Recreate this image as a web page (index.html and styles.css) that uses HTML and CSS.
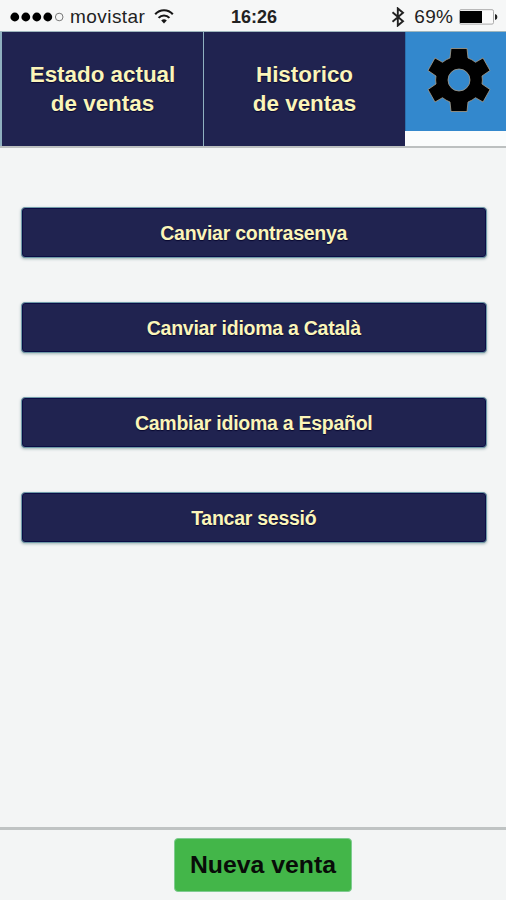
FILE: index.html
```html
<!DOCTYPE html>
<html lang="es">
<head>
<meta charset="utf-8">
<title>Ventas</title>
<link rel="stylesheet" href="styles.css">
</head>
<body>
<div class="status">
  <div class="status-left">
    <svg class="signal" width="54" height="12" viewBox="0 0 54 12"><circle cx="4.8" cy="6" r="4.4"/><circle cx="15.8" cy="6" r="4.4"/><circle cx="26.8" cy="6" r="4.4"/><circle cx="37.8" cy="6" r="4.4"/><circle cx="49.2" cy="6" r="3.8" fill="none" stroke="#777" stroke-width="1"/></svg>
    <span class="carrier">movistar</span>
    <svg class="wifi" width="20" height="15" viewBox="0 0 20 15" fill="none" stroke="#161616" stroke-width="2.1"><path d="M1.2 5.2C6-.1 14-.1 18.8 5.2M4.6 8.9C7.5 5.6 12.5 5.6 15.4 8.9"/><path d="M7.2 11.6Q10 9 12.800 11.600L10 14.400Z" fill="#161616" stroke="none"/></svg>
  </div>
  <div class="time">16:26</div>
  <div class="status-right">
    <svg width="14" height="20" viewBox="0 0 14 20" fill="none" stroke="#222" stroke-width="1.9"><path d="M1.500 5.200L12 14.200L6.800 18.600V1.400L12 5.800L1.500 14.800"/></svg>
    <span class="percent">69%</span>
    <svg class="battery" width="39" height="16" viewBox="0 0 39 16"><rect x=".5" y=".7" width="34" height="14.4" rx="1.5" fill="#fafafa" stroke="#aaa"/><rect x="1" y="2" width="22" height="12" fill="#000"/><path d="M36 5Q38.4 5.5 38.4 8T36 11Z" fill="#222"/></svg>
  </div>
</div>
<nav class="tabs">
  <div class="tab">Estado actual<br>de ventas</div>
  <div class="tab">Historico<br>de ventas</div>
  <div class="settings">
    <svg width="64" height="66" viewBox="-32 -33 64 66"><path fill-rule="evenodd" stroke="#a99c86" stroke-width=".8" stroke-linejoin="round" d="M-8 -31.5H8L9 -22Q13 -20.500 16.500 -17.700L24 -22L31 -9.500L23 -4Q23.800 0 23 4L31 9.500L24 22L16.500 17.700Q13 20.500 9 22L8 31.500H-8L-9 22Q-13 20.500 -16.500 17.700L-24 22L-31 9.500L-23 4Q-23.800 0 -23 -4L-31 -9.500L-24 -22L-16.500 -17.700Q-13 -20.500 -9 -22ZM0 -11A11 11 0 1 0 0 11A11 11 0 1 0 0 -11Z"/></svg>
  </div>
</nav>
<main class="options">
  <button class="option">Canviar contrasenya</button>
  <button class="option">Canviar idioma a Català</button>
  <button class="option">Cambiar idioma a Español</button>
  <button class="option">Tancar sessió</button>
</main>
<footer class="footer"><button class="new-sale">Nueva venta</button></footer>
</body>
</html>
```
FILE: styles.css
```css
* { box-sizing: border-box; }
body {
  margin: 0;
  height: 900px;
  display: flex;
  flex-direction: column;
  overflow: hidden;
  background: #f3f5f5;
  font-family: "Liberation Sans", Arial, sans-serif;
}
svg { display: block; flex: none; }
.status {
  height: 31px;
  padding: 2px 8px 0 10px;
  display: grid;
  grid-template-columns: 1fr auto 1fr;
  align-items: center;
  background: #f6f7f7;
  color: #222;
  line-height: 28px;
}
.status-left, .status-right { display: flex; align-items: center; }
.status-right { justify-content: flex-end; }
.carrier { margin-left: 6px; width: 84px; font-size: 19px; letter-spacing: .45px; }
.time { font-size: 18px; font-weight: bold; }
.percent { margin: 0 6px 0 9px; font-size: 19px; letter-spacing: .2px; }
.tabs {
  height: 117px;
  display: flex;
  border-top: 1px solid #9fb6bd;
  border-bottom: 2px solid #bcc0c0;
  background: #fafcfc;
}
.tab {
  width: 202px;
  padding-top: 28px;
  border-left: 1px solid #8fb0c0;
  background: #202350;
  color: #fbf5b9;
  font-size: 22.4px;
  font-weight: bold;
  line-height: 29px;
  text-align: center;
  text-shadow: 0 1px 1px #080830;
}
.tab:first-child { width: 203px; border-left: 2px solid #8fb0c0; }
.settings {
  flex: 1;
  height: 99px;
  padding: 15px 0 0 21px;
  border-left: 1px solid #2a70ad;
  background: #3388cd;
}
.options {
  flex: 1;
  padding: 58.5px 19px 0 20.5px;
  display: flex;
  flex-direction: column;
  gap: 44.2px;
}
.option {
  height: 51px;
  padding: 0;
  border: 1px solid #6f9aa8;
  border-radius: 4px;
  background: #202350;
  box-shadow: inset 0 0 0 1px #0b0c45, 0 1px 3px #9fb3b5;
  color: #fbf5b9;
  font: bold 19.5px/50px "Liberation Sans", Arial, sans-serif;
  letter-spacing: -.26px;
  text-shadow: 0 1px 1px #080830;
}
.footer {
  height: 73px;
  padding: 8px 0 0 20px;
  border-top: 3px solid #bfc3c3;
  text-align: center;
}
.new-sale {
  width: 178px;
  height: 54px;
  padding: 0;
  border: 1px solid #7fcb91;
  border-radius: 4px;
  background: #43b649;
  color: #080c08;
  font: bold 24.8px/52px "Liberation Sans", Arial, sans-serif;
}
```
